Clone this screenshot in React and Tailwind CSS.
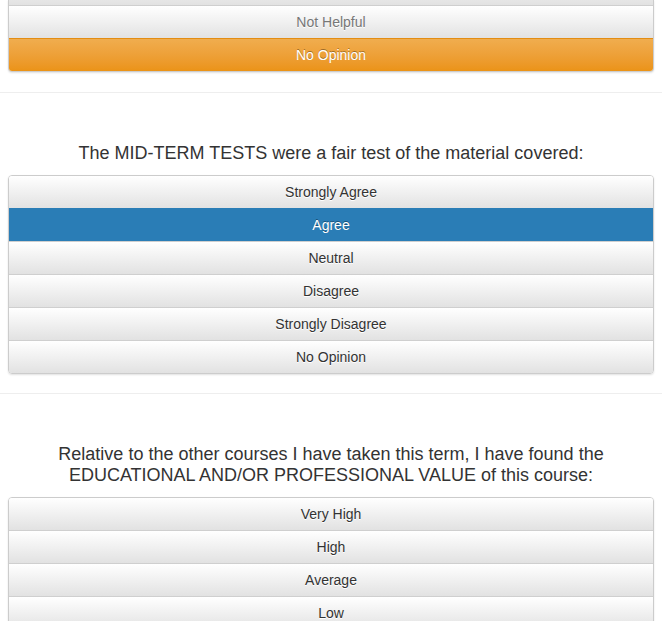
import React from "react";

const questions = [
  {
    lines: ["The MID-TERM TESTS were a fair test of the material covered:"],
    options: ["Strongly Agree", "Agree", "Neutral", "Disagree", "Strongly Disagree", "No Opinion"],
    selected: "Agree",
  },
  {
    lines: [
      "Relative to the other courses I have taken this term, I have found the",
      "EDUCATIONAL AND/OR PROFESSIONAL VALUE of this course:",
    ],
    options: ["Very High", "High", "Average", "Low", "Very Low", "No Opinion"],
  },
];

function Option({ label, active, tone, first, muted }) {
  const height = first ? " h-[32px]" : " h-[33px] border-t";
  let cls =
    "flex items-center justify-center text-[14px] [text-shadow:0_1px_0_#fff] bg-gradient-to-b from-white to-[#e2e2e2] border-[#cfcfcf]";
  cls += muted ? " text-[#777]" : " text-[#333]";
  if (active && tone === "orange") {
    cls =
      "flex items-center justify-center text-[14px] text-white [text-shadow:0_-1px_0_rgba(0,0,0,0.35)] bg-gradient-to-b from-[#f0ad4e] to-[#eb9316] border-[#e38d13]";
  } else if (active) {
    cls =
      "flex items-center justify-center text-[14px] text-white [text-shadow:0_-1px_0_rgba(0,0,0,0.35)] bg-[#2a7db6] border-[#2a7db6]";
  }
  return <div className={cls + height}>{label}</div>;
}

function Question({ q }) {
  return (
    <section className="border-t border-[#eee] pt-[50px] pb-[19px]">
      <h4 className="px-2 text-center text-[18px] leading-[21px] text-[#333]">
        {q.lines.map((l) => (
          <div key={l}>{l}</div>
        ))}
      </h4>
      <div className="mx-2 mt-[11px] overflow-hidden rounded-[4px] border border-[#ccc] shadow-[0_1px_2px_rgba(0,0,0,0.12)]">
        {q.options.map((o, i) => (
          <Option key={o} label={o} first={i === 0} active={o === q.selected} />
        ))}
      </div>
    </section>
  );
}

export default function App() {
  return (
    <div className="h-[621px] overflow-hidden bg-white font-['Liberation_Sans',Arial,sans-serif]">
      <section className="pb-[20px]">
        <div className="mx-2 overflow-hidden rounded-b-[4px] border-x border-b border-[#ccc] shadow-[0_1px_2px_rgba(0,0,0,0.12)]">
          <div className="h-[5px] bg-gradient-to-b from-[#e6e6e6] to-[#e2e2e2]" />
          <Option label="Not Helpful" muted />
          <Option label="No Opinion" active tone="orange" />
        </div>
      </section>
      {questions.map((q, i) => (
        <Question key={i} q={q} />
      ))}
    </div>
  );
}
